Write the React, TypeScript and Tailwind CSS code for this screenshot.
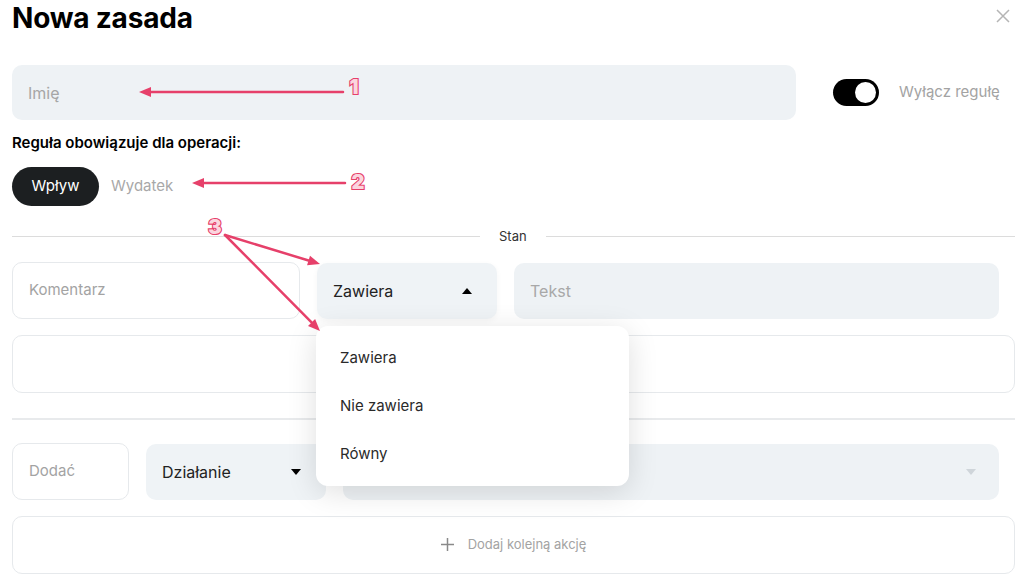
function Caret({ up = false, faint = false }: { up?: boolean; faint?: boolean }) {
    return (
        <svg width="10" height="6" viewBox="0 0 10 6" className={faint ? "text-[#cfd5da]" : "text-black"}>
            {up ? <path d="M0 6 L5 0 L10 6 Z" fill="currentColor" /> : <path d="M0 0 L10 0 L5 6 Z" fill="currentColor" />}
        </svg>
    );
}

function Arrow({ x1, y1, x2, y2 }: { x1: number; y1: number; x2: number; y2: number }) {
    const a = Math.atan2(y2 - y1, x2 - x1);
    const len = 12;
    const w = 5;
    const bx = x2 - Math.cos(a) * len;
    const by = y2 - Math.sin(a) * len;
    const p1 = `${bx + Math.sin(a) * w},${by - Math.cos(a) * w}`;
    const p2 = `${bx - Math.sin(a) * w},${by + Math.cos(a) * w}`;
    return (
        <g>
            <line x1={x1} y1={y1} x2={bx} y2={by} stroke="#e6406a" strokeWidth="2.5" strokeLinecap="round" />
            <polygon points={`${x2},${y2} ${p1} ${p2}`} fill="#e6406a" />
        </g>
    );
}

function Num({ x, y, n }: { x: number; y: number; n: string }) {
    return (
        <text
            x={x}
            y={y}
            textAnchor="middle"
            fontFamily="Inter, sans-serif"
            fontWeight="900"
            fontSize="20"
            fill="#fbd5de"
            stroke="#e6406a"
            strokeWidth="2.2"
            paintOrder="stroke"
        >
            {n}
        </text>
    );
}

export default function App() {
    return (
        <div className="relative w-[1024px] h-[581px] overflow-hidden bg-white font-['Inter',sans-serif] text-[#1f1f1f]">
            <div className="pl-3 pr-[9px]">
                <div className="flex items-start justify-between h-[38px]">
                    <h1 className="text-[28px] font-bold leading-[36px] text-black tracking-[-0.2px]">Nowa zasada</h1>
                    <svg width="14" height="14" viewBox="0 0 14 14" className="mt-[9px] mr-[5px]">
                        <path d="M1 1 L13 13 M13 1 L1 13" stroke="#b5b5b5" strokeWidth="1.5" />
                    </svg>
                </div>

                <div className="mt-[27px] flex items-center">
                    <div className="w-[784px] h-[55px] rounded-[10px] bg-[#eef2f5] flex items-center px-4 text-[16px] text-[#a6a6a6]">
                        Imię
                    </div>
                    <div className="ml-[37px] w-[46px] h-[27px] rounded-full bg-black flex items-center justify-end pr-[3px]">
                        <div className="w-[21px] h-[21px] rounded-full bg-white" />
                    </div>
                    <span className="ml-5 text-[15px] text-[#a3a3a3]">Wyłącz regułę</span>
                </div>

                <div className="mt-[14px] text-[15px] font-semibold text-black leading-[18px]">
                    Reguła obowiązuje dla operacji:
                </div>

                <div className="mt-[15px] flex items-center gap-3">
                    <div className="h-[39px] w-[87px] rounded-full bg-[#1c1f21] text-white text-[15px] flex items-center justify-center">
                        Wpływ
                    </div>
                    <span className="text-[15px] text-[#a8a8a8]">Wydatek</span>
                </div>

                <div className="mt-[21px] flex items-center">
                    <div className="w-[468px] h-px bg-[#dcdcdc]" />
                    <span className="mx-[19px] text-[13px] text-[#333]">Stan</span>
                    <div className="flex-1 h-px bg-[#dcdcdc]" />
                </div>

                <div className="mt-[15px] flex gap-[17px]">
                    <div className="w-[288px] h-[57px] rounded-[10px] border border-[#e6e9ec] flex items-center px-4 text-[15px] text-[#a3a3a3]">
                        Komentarz
                    </div>
                    <div className="mt-px w-[180px] h-[56px] rounded-[10px] bg-[#eff3f6] flex items-center justify-between pl-4 pr-[25px] text-[16px] text-[#222] shadow-[0_2px_6px_rgba(0,0,0,0.04)]">
                        Zawiera
                        <Caret up />
                    </div>
                    <div className="mt-px w-[485px] h-[56px] rounded-[10px] bg-[#eef2f5] flex items-center px-4 text-[16px] text-[#a8a8a8]">
                        Tekst
                    </div>
                </div>

                <div className="mt-4 h-[58px] rounded-[10px] border border-[#e6e9ec]" />

                <div className="mt-[25px] h-[2px] bg-[#e8eaec]" />

                <div className="mt-[23px] flex gap-[17px]">
                    <div className="w-[117px] h-[57px] rounded-[10px] border border-[#e6e9ec] flex items-center px-4 text-[15px] text-[#a3a3a3]">
                        Dodać
                    </div>
                    <div className="mt-px w-[180px] h-[56px] rounded-[10px] bg-[#eff3f6] flex items-center justify-between pl-4 pr-[25px] text-[16px] text-[#222]">
                        Działanie
                        <Caret />
                    </div>
                    <div className="mt-px w-[656px] h-[56px] rounded-[10px] bg-[#eef2f5] flex items-center justify-end pr-[23px]">
                        <Caret faint />
                    </div>
                </div>

                <div className="mt-[16px] h-[58px] rounded-[10px] border border-[#e6e9ec] flex items-center justify-center gap-[14px] text-[13px] text-[#a3a3a3]">
                    <svg width="13" height="13" viewBox="0 0 14 14">
                        <path d="M7 0 V14 M0 7 H14" stroke="#8a8a8a" strokeWidth="1.6" />
                    </svg>
                    Dodaj kolejną akcję
                </div>
            </div>

            <div className="absolute left-[316px] top-[326px] w-[313px] h-[160px] rounded-[12px] bg-white shadow-[0_6px_30px_rgba(0,0,0,0.13)] flex flex-col py-2 text-[15px] text-[#2a2a2a]">
                <div className="h-12 flex items-center px-6">Zawiera</div>
                <div className="h-12 flex items-center px-6">Nie zawiera</div>
                <div className="h-12 flex items-center px-6">Równy</div>
            </div>

            <svg className="absolute inset-0 pointer-events-none" width="1024" height="581" viewBox="0 0 1024 581">
                <Arrow x1={343} y1={92} x2={139} y2={92} />
                <Num x={354} y={94} n="1" />
                <Arrow x1={345} y1={183} x2={192} y2={183} />
                <Num x={358} y={189} n="2" />
                <Arrow x1={225} y1={235} x2={320} y2={264} />
                <Arrow x1={225} y1={235} x2={320} y2={331} />
                <Num x={215} y={234} n="3" />
            </svg>
        </div>
    );
}
